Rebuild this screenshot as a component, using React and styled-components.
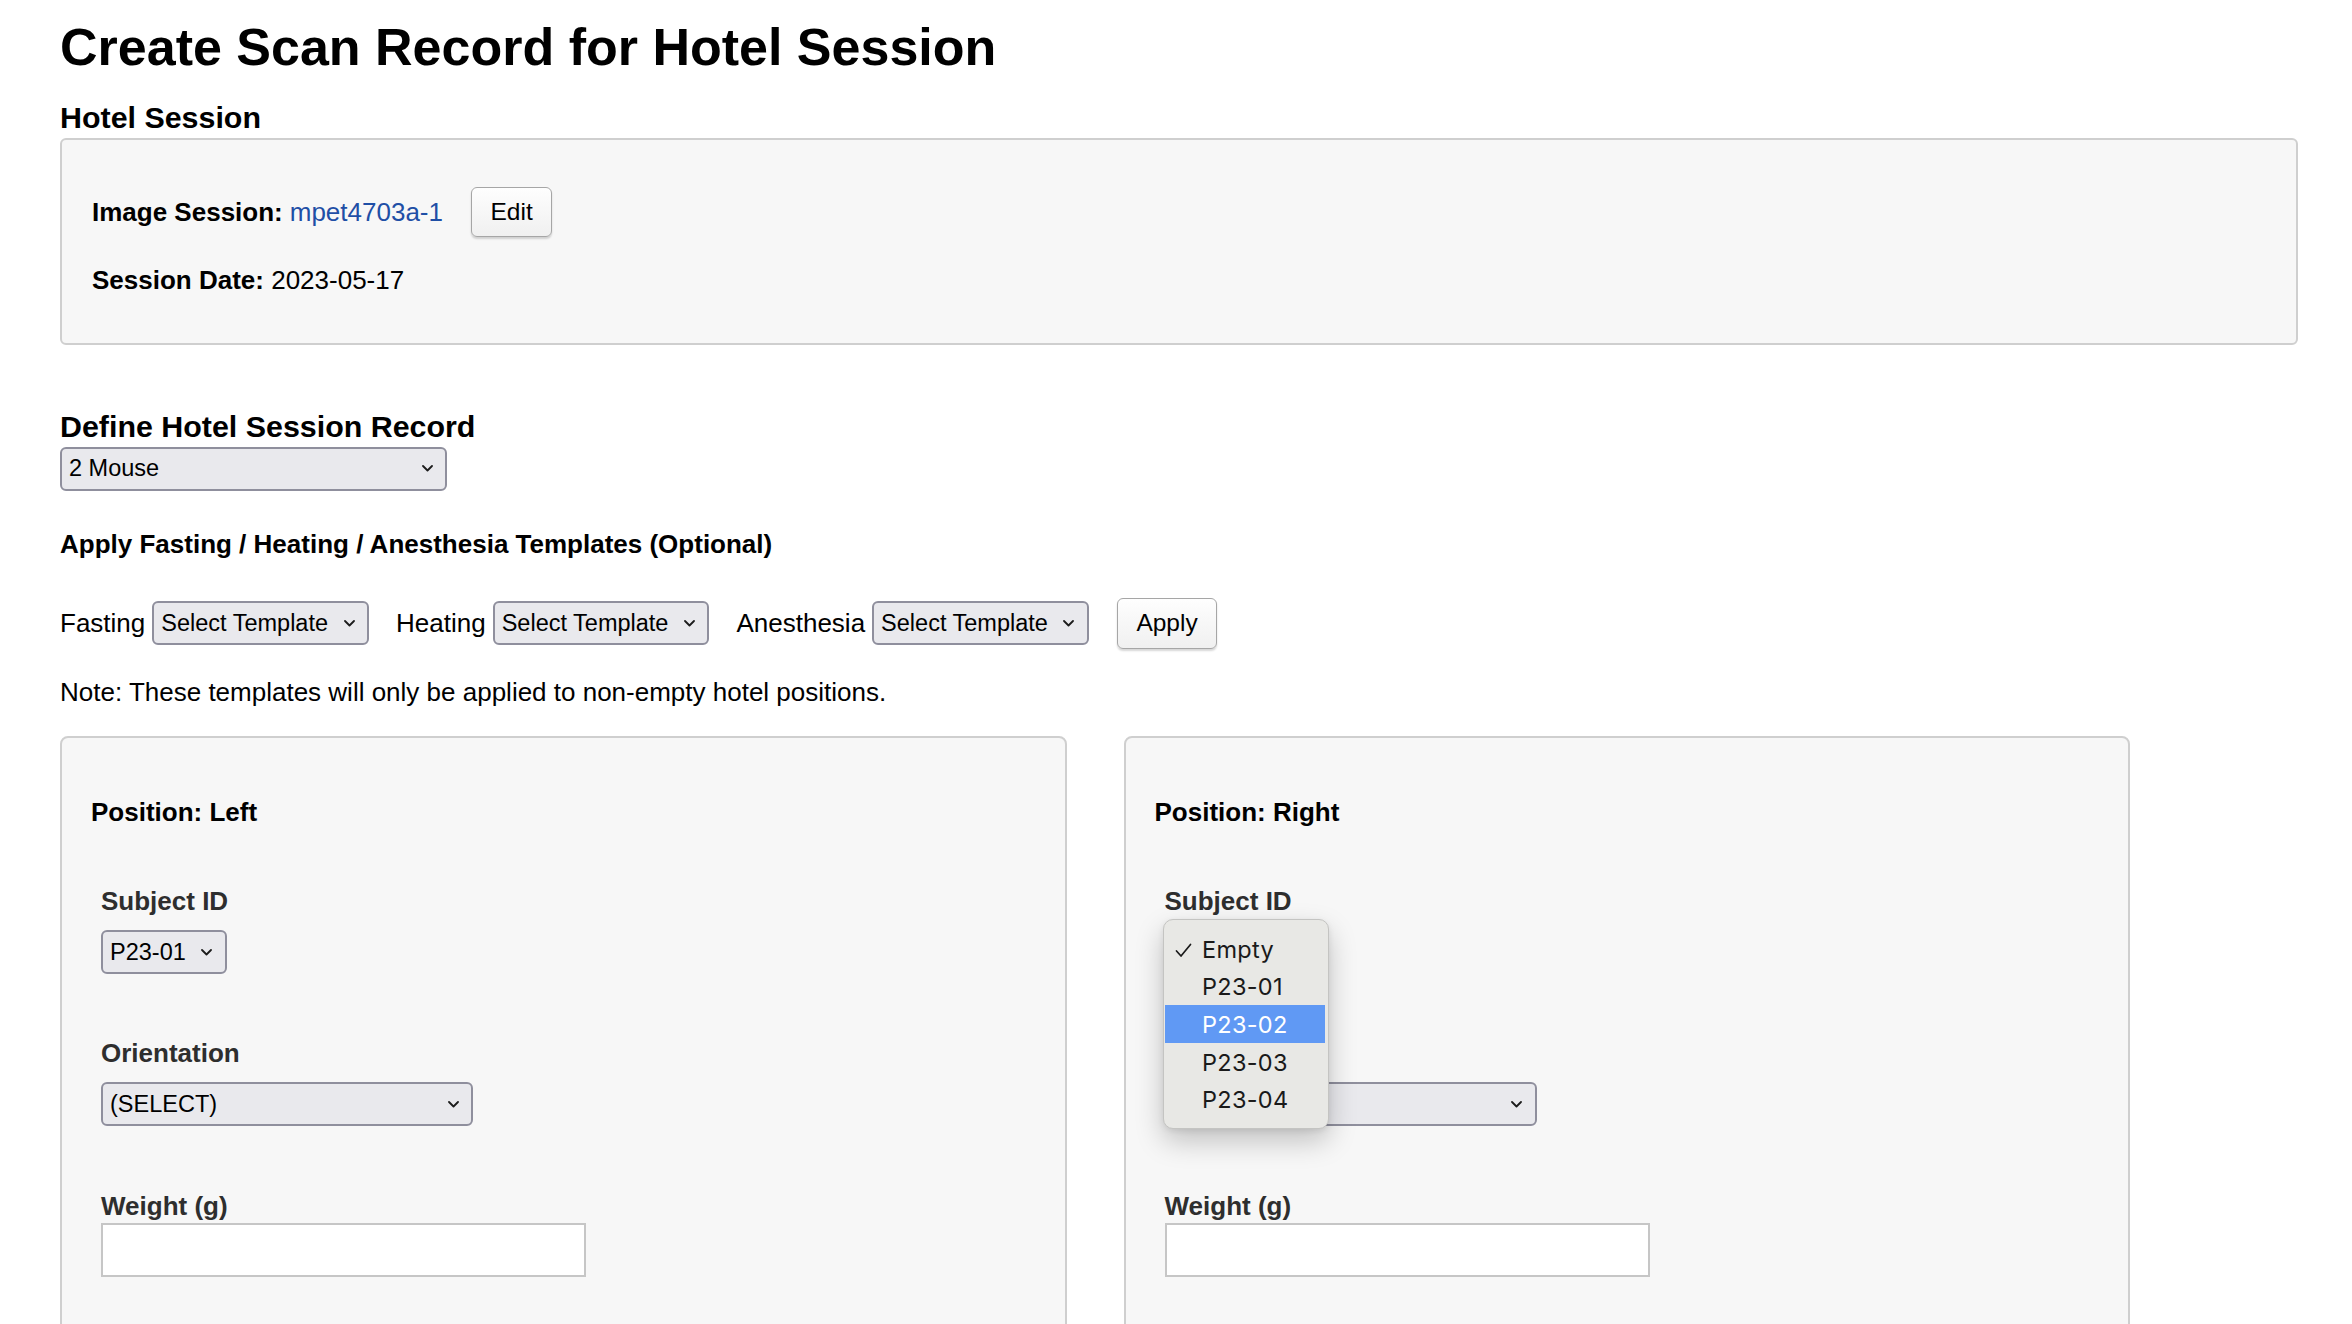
import styled, { createGlobalStyle } from 'styled-components'

const GlobalStyle = createGlobalStyle`
  html, body {
    margin: 0;
    padding: 0;
    overflow: hidden;
    background: #fff;
  }

  body {
    font-family: 'Liberation Sans', Arial, Helvetica, sans-serif;
    font-size: 26px;
    color: #000;
  }
`

const Page = styled.div`
  padding: 0 54px 0 60px;
`

const Title = styled.h1`
  margin: 16.5px 0 0;
  font-size: 52px;
  line-height: 60px;
  font-weight: 700;
`

const SectionTitle = styled.h3`
  margin: ${({ $top }) => $top}px 0 ${({ $bottom }) => $bottom}px;
  font-size: 30.4px;
  line-height: 35px;
  font-weight: 700;
`

const SubTitle = styled.h4`
  margin: 38px 0 0;
  font-size: 26px;
  line-height: 30px;
  font-weight: 700;
`

const SessionBox = styled.div`
  box-sizing: border-box;
  border: 2px solid #cfcfcf;
  border-radius: 6px;
  background: #f7f7f7;
  padding: 46.5px 30px 47.5px;
`

const InfoRow = styled.div`
  display: flex;
  align-items: center;
  height: 50px;
  line-height: 30px;
`

const InfoLine = styled.div`
  margin-top: 28.5px;
  line-height: 30px;
`

const Strong = styled.b`
  font-weight: 700;
`

const Link = styled.a`
  color: #1f4fa6;
  text-decoration: none;
  margin-left: 7px;
`

const Button = styled.button`
  box-sizing: border-box;
  height: ${({ $height }) => $height || 50}px;
  margin-left: ${({ $gap }) => $gap || 0}px;
  padding: 0 18.5px;
  font-family: 'Liberation Sans', Arial, Helvetica, sans-serif;
  font-size: 24.5px;
  color: #000;
  background: linear-gradient(#fefefe, #f0f0f0);
  border: 1.5px solid #a6a6a6;
  border-radius: 6px;
  box-shadow: 0 2px 2px rgba(0, 0, 0, 0.16);
`

const SelectBox = styled.div`
  box-sizing: border-box;
  display: flex;
  align-items: center;
  justify-content: space-between;
  gap: 15.5px;
  height: 44px;
  width: ${({ $width }) => ($width ? `${$width}px` : 'fit-content')};
  padding: 0 12.5px 0 7px;
  margin-top: ${({ $top }) => $top || 0}px;
  background: #e9e9ed;
  border: 2px solid #8f8f9d;
  border-radius: 6px;
  font-size: 23.5px;
  white-space: nowrap;
`

const Chevron = () => (
  <svg width="11" height="7" viewBox="0 0 11 7" fill="none">
    <path d="M1 1L5.5 5.5L10 1" stroke="#1c1c1c" strokeWidth="1.8" strokeLinecap="round" strokeLinejoin="round" />
  </svg>
)

function Select({ value, width, top }) {
  return (
    <SelectBox $width={width} $top={top}>
      <span>{value}</span>
      <Chevron />
    </SelectBox>
  )
}

const TemplateRow = styled.div`
  display: flex;
  align-items: center;
  height: 51px;
  margin-top: 39px;
  line-height: 30px;
`

const TemplateGroup = styled.div`
  display: flex;
  align-items: center;
  gap: 7px;
  margin-right: 27px;
`

const Note = styled.p`
  margin: 28.5px 0 0;
  line-height: 30px;
`

const Positions = styled.div`
  display: flex;
  gap: 57px;
  margin-top: 28.5px;
`

const PositionCard = styled.div`
  box-sizing: border-box;
  width: 1006.5px;
  border: 2px solid #cfcfcf;
  border-radius: 8px;
  background: #f7f7f7;
  padding: 59px 29px 140px;
`

const PositionTitle = styled.div`
  font-weight: 700;
  line-height: 30px;
`

const Field = styled.div`
  position: relative;
  margin: ${({ $top }) => $top}px 0 0 10px;
`

const FieldLabel = styled.div`
  font-weight: 700;
  color: #2e2e2e;
  line-height: 30px;
  margin-bottom: ${({ $gap }) => $gap}px;
`

const TextInput = styled.input`
  display: block;
  box-sizing: border-box;
  width: 485px;
  height: 54px;
  margin: 0;
  background: #fff;
  border: 2px solid #c6c6c6;
  border-radius: 0;
  font-size: 24px;
`

const SlotWrap = styled.div`
  position: relative;
`

const Popup = styled.ul`
  position: absolute;
  top: -11px;
  left: -1.5px;
  z-index: 5;
  box-sizing: border-box;
  width: 166px;
  margin: 0;
  padding: 9.5px 3px 10.5px 1px;
  list-style: none;
  background: #e8e8e5;
  border: 1px solid #c4c4c2;
  border-radius: 10px;
  box-shadow: 0 12px 28px rgba(0, 0, 0, 0.22), 0 2px 6px rgba(0, 0, 0, 0.08);
  font-family: Inter, 'Noto Sans', sans-serif;
  font-size: 23.5px;
`

const PopupItem = styled.li`
  position: relative;
  height: 37.7px;
  line-height: 39px;
  padding-left: 37px;
  color: ${({ $active }) => ($active ? '#fff' : '#1a1a1a')};
  background: ${({ $active }) => ($active ? '#6099f4' : 'transparent')};
  letter-spacing: 0.3px;
`

const Check = styled.svg`
  position: absolute;
  left: 10px;
  top: 13px;
`

const subjects = ['Empty', 'P23-01', 'P23-02', 'P23-03', 'P23-04']

function SubjectMenu() {
  return (
    <Popup>
      {subjects.map(s => (
        <PopupItem key={s} $active={s === 'P23-02'}>
          {s === 'Empty' ? (
            <Check width="17" height="15" viewBox="0 0 17 15" fill="none">
              <path d="M1.5 8L6 13L15.5 1.5" stroke="#1a1a1a" strokeWidth="1.7" strokeLinecap="round" strokeLinejoin="round" />
            </Check>
          ) : null}
          {s}
        </PopupItem>
      ))}
    </Popup>
  )
}

function PositionPanel({ side, subject, open }) {
  return (
    <PositionCard>
      <PositionTitle>Position: {side}</PositionTitle>
      <Field $top={59}>
        <FieldLabel $gap={14.5}>Subject ID</FieldLabel>
        <SlotWrap>
          <Select value={subject} />
          {open ? <SubjectMenu /> : null}
        </SlotWrap>
      </Field>
      <Field $top={63.5}>
        <FieldLabel $gap={14.5}>Orientation</FieldLabel>
        <Select value="(SELECT)" width={372} />
      </Field>
      <Field $top={64.5}>
        <FieldLabel $gap={2}>Weight (g)</FieldLabel>
        <TextInput type="text" />
      </Field>
    </PositionCard>
  )
}

export default function App() {
  return (
    <>
      <GlobalStyle />
      <Page>
        <Title>Create Scan Record for Hotel Session</Title>
        <SectionTitle $top={23} $bottom={3.5}>Hotel Session</SectionTitle>
        <SessionBox>
          <InfoRow>
            <Strong>Image Session:</Strong>
            <Link href="#">mpet4703a-1</Link>
            <Button $gap={28}>Edit</Button>
          </InfoRow>
          <InfoLine>
            <Strong>Session Date:</Strong> 2023-05-17
          </InfoLine>
        </SessionBox>

        <SectionTitle $top={64.5} $bottom={2.5}>Define Hotel Session Record</SectionTitle>
        <Select value="2 Mouse" width={387} />

        <SubTitle>Apply Fasting / Heating / Anesthesia Templates (Optional)</SubTitle>
        <TemplateRow>
          <TemplateGroup>
            <span>Fasting</span>
            <Select value="Select Template" />
          </TemplateGroup>
          <TemplateGroup>
            <span>Heating</span>
            <Select value="Select Template" />
          </TemplateGroup>
          <TemplateGroup>
            <span>Anesthesia</span>
            <Select value="Select Template" />
          </TemplateGroup>
          <Button $height={51} $gap={1}>Apply</Button>
        </TemplateRow>
        <Note>Note: These templates will only be applied to non-empty hotel positions.</Note>

        <Positions>
          <PositionPanel side="Left" subject="P23-01" />
          <PositionPanel side="Right" subject="Empty" open />
        </Positions>
      </Page>
    </>
  )
}
